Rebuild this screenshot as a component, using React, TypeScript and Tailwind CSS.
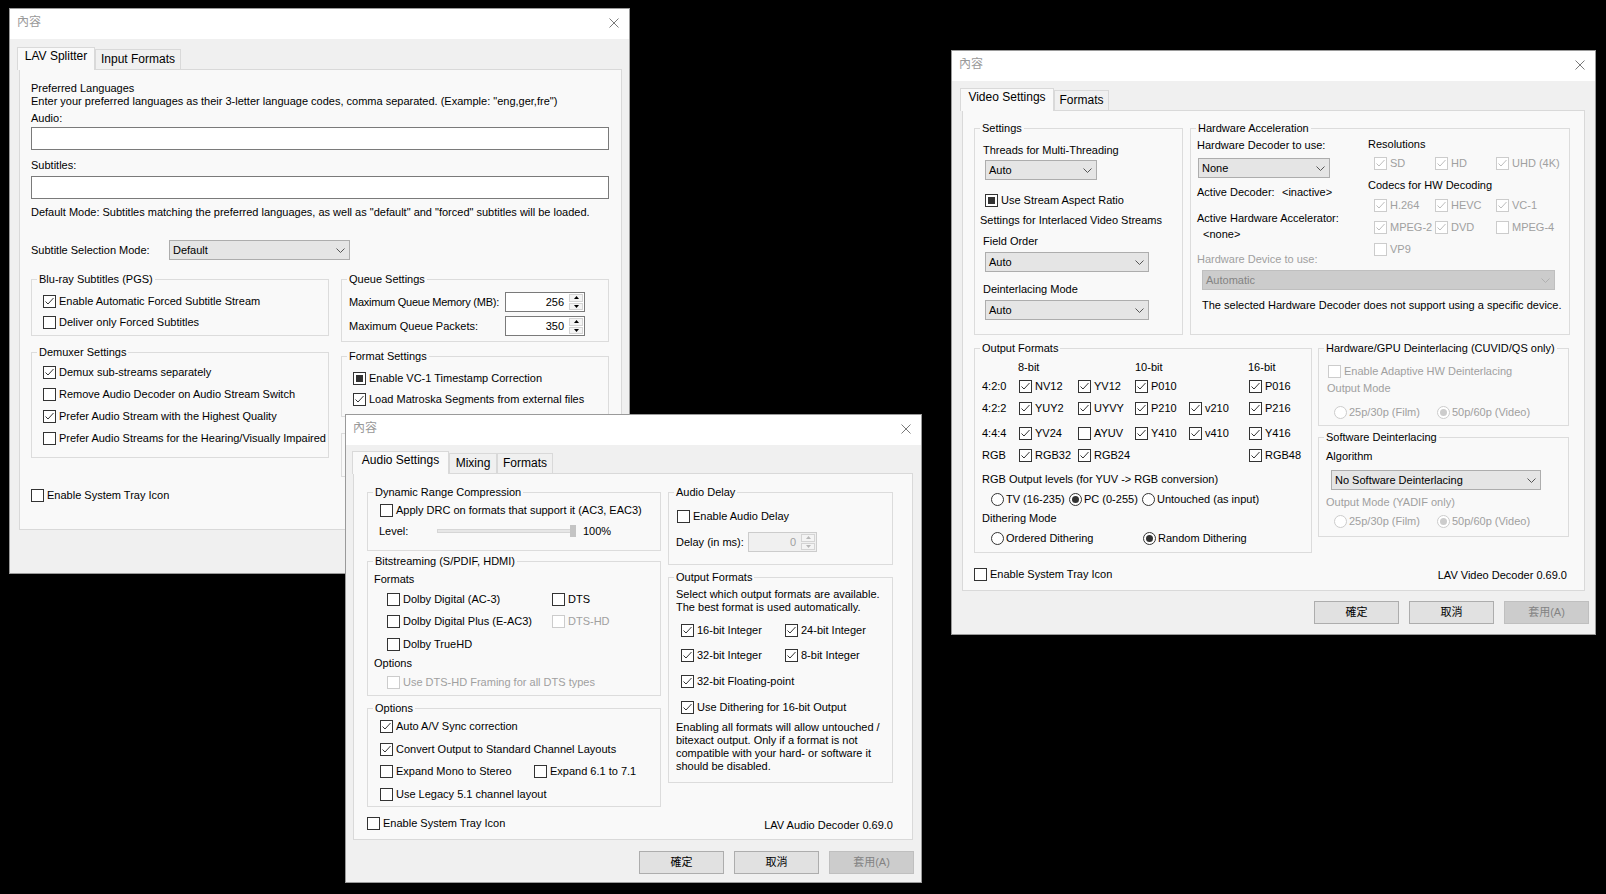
import React from "react";

type Mark = "on" | "off" | "mixed";

/* ---------- small win32-ish controls ---------- */

function Box({ s = "off", dis = false }: { s?: Mark; dis?: boolean }) {
  return (
    <span
      className={
        "flex h-[13px] w-[13px] shrink-0 items-center justify-center border bg-white " +
        (dis ? "border-[#cccccc]" : "border-[#333333]")
      }
    >
      {s === "on" && (
        <svg width="11" height="11" viewBox="0 0 11 11">
          <path d="M1.5 5.5L4 8L9.5 2" fill="none" stroke={dis ? "#bdbdbd" : "#333333"} strokeWidth="1" />
        </svg>
      )}
      {s === "mixed" && <span className="h-[7px] w-[7px] bg-[#333333]" />}
    </span>
  );
}

function Check({ label, s = "off", dis = false, className = "" }: { label: string; s?: Mark; dis?: boolean; className?: string }) {
  return (
    <div className={"flex items-center " + className}>
      <Box s={s} dis={dis} />
      <span className={"ml-[3px] whitespace-nowrap " + (dis ? "text-[#a0a0a0]" : "")}>{label}</span>
    </div>
  );
}

function Radio({ label, on = false, dis = false, className = "" }: { label: string; on?: boolean; dis?: boolean; className?: string }) {
  return (
    <div className={"flex items-center " + className}>
      <span
        className={
          "flex h-[13px] w-[13px] shrink-0 items-center justify-center rounded-full border bg-white " +
          (dis ? "border-[#cccccc]" : "border-[#333333]")
        }
      >
        {on && <span className={"h-[7px] w-[7px] rounded-full " + (dis ? "bg-[#cccccc]" : "bg-[#333333]")} />}
      </span>
      <span className={"ml-[2px] whitespace-nowrap " + (dis ? "text-[#a0a0a0]" : "")}>{label}</span>
    </div>
  );
}

function Combo({ v, dis = false, className = "" }: { v: string; dis?: boolean; className?: string }) {
  return (
    <div
      className={
        "flex h-[20px] items-center justify-between border pl-[3px] pr-[4px] " +
        (dis ? "border-[#bfbfbf] bg-[#cccccc] text-[#838383]" : "border-[#adadad] bg-[#e5e5e5]") +
        " " +
        className
      }
    >
      <span className="whitespace-nowrap">{v}</span>
      <svg width="9" height="5" viewBox="0 0 9 5">
        <path d="M0.5 0.5L4.5 4.5L8.5 0.5" fill="none" stroke={dis ? "#b0b0b0" : "#555555"} strokeWidth="1" />
      </svg>
    </div>
  );
}

function Spin({ v, dis = false, className = "" }: { v: string; dis?: boolean; className?: string }) {
  const arrow = dis ? "#b8b8b8" : "#000000";
  return (
    <div
      className={
        "flex h-[20px] shrink-0 border " +
        (dis ? "border-[#cccccc] bg-[#f0f0f0] text-[#a0a0a0]" : "border-[#7a7a7a] bg-white") +
        " " +
        className
      }
    >
      <span className="flex flex-1 items-center justify-end pr-[4px]">{v}</span>
      <span className="flex w-[16px] flex-col gap-px p-px">
        <span className="flex flex-1 items-center justify-center border border-[#d4d4d4] bg-[#f4f4f4]">
          <svg width="5" height="3" viewBox="0 0 5 3">
            <path d="M0 3L2.5 0L5 3Z" fill={arrow} />
          </svg>
        </span>
        <span className="flex flex-1 items-center justify-center border border-[#d4d4d4] bg-[#f4f4f4]">
          <svg width="5" height="3" viewBox="0 0 5 3">
            <path d="M0 0L2.5 3L5 0Z" fill={arrow} />
          </svg>
        </span>
      </span>
    </div>
  );
}

function Btn({ t, dis = false }: { t: string; dis?: boolean }) {
  return (
    <div
      className={
        "flex h-[23px] w-[85px] items-center justify-center border " +
        (dis ? "border-[#bfbfbf] bg-[#cccccc] text-[#838383]" : "border-[#adadad] bg-[#e1e1e1]")
      }
    >
      {t}
    </div>
  );
}

// group box: outer classes size/offset the frame, inner classes pad the contents
function Group({ title, className = "", inner = "", children }: { title: string; className?: string; inner?: string; children?: React.ReactNode }) {
  return (
    <fieldset className={"min-w-0 border border-[#dcdcdc] " + className}>
      <legend className="ml-[5px] whitespace-nowrap px-[2px] leading-[13px]">{title}</legend>
      <div className={inner}>{children}</div>
    </fieldset>
  );
}

function Tab({ label, sel = false, className = "" }: { label: string; sel?: boolean; className?: string }) {
  if (sel) {
    return (
      <div
        className={
          "relative z-10 -mb-px flex h-[23px] justify-center border border-b-0 border-[#d9d9d9] bg-[#f9f9f9] pt-[1px] text-[12px] leading-[14px] " +
          className
        }
      >
        {label}
      </div>
    );
  }
  return (
    <div className={"flex h-[20px] items-center justify-center border border-b-0 border-[#d9d9d9] bg-[#f0f0f0] text-[12px] " + className}>
      {label}
    </div>
  );
}

function Win({ className, children }: { className: string; children: React.ReactNode }) {
  return (
    <div className={"absolute flex flex-col border border-[#9a9a9a] bg-[#f0f0f0] " + className}>
      <div className="flex h-[30px] shrink-0 items-center justify-between bg-white pb-[3px] pl-[7px] pr-[10px]">
        <span className="text-[12px] text-[#999999]">內容</span>
        <svg width="10" height="10" viewBox="0 0 10 10">
          <path d="M0.5 0.5L9.5 9.5M9.5 0.5L0.5 9.5" stroke="#7a7a7a" strokeWidth="1" />
        </svg>
      </div>
      {children}
    </div>
  );
}

/* ---------- LAV Splitter ---------- */

function SplitterWin() {
  return (
    <Win className="left-[9px] top-[8px] h-[566px] w-[621px]">
      <div className="pl-[7px] pt-[8px]">
        <div className="flex items-end">
          <Tab sel label="LAV Splitter" className="w-[78px]" />
          <Tab label="Input Formats" className="w-[86px]" />
        </div>
        <div className="ml-[2px] h-[461px] w-[603px] border border-[#d9d9d9] bg-[#f9f9f9] pl-[11px]">
          <div className="mt-[12px]">Preferred Languages</div>
          <div>Enter your preferred languages as their 3-letter language codes, comma separated. (Example: "eng,ger,fre")</div>
          <div className="mt-[4px]">Audio:</div>
          <div className="mt-[2px] h-[23px] w-[578px] border border-[#7a7a7a] bg-white" />
          <div className="mt-[9px]">Subtitles:</div>
          <div className="mt-[4px] h-[23px] w-[578px] border border-[#7a7a7a] bg-white" />
          <div className="mt-[7px]">
            Default Mode: Subtitles matching the preferred languages, as well as "default" and "forced" subtitles will be loaded.
          </div>
          <div className="mt-[21px] flex h-[20px] items-center">
            <span className="w-[138px]">Subtitle Selection Mode:</span>
            <Combo v="Default" className="w-[181px]" />
          </div>

          <div className="mt-[13px] flex gap-[12px]">
            <div className="w-[298px]">
              <Group title="Blu-ray Subtitles (PGS)" inner="pb-[2px] pl-[11px] pt-[5px]">
                <Check className="h-[21px]" s="on" label="Enable Automatic Forced Subtitle Stream" />
                <Check className="h-[21px]" label="Deliver only Forced Subtitles" />
              </Group>
              <Group title="Demuxer Settings" className="mt-[10px]" inner="pb-[8px] pl-[11px] pt-[2px]">
                <Check className="h-[22px]" s="on" label="Demux sub-streams separately" />
                <Check className="h-[22px]" label="Remove Audio Decoder on Audio Stream Switch" />
                <Check className="h-[22px]" s="on" label="Prefer Audio Stream with the Highest Quality" />
                <Check className="h-[22px]" label="Prefer Audio Streams for the Hearing/Visually Impaired" />
              </Group>
            </div>
            <div className="w-[268px]">
              <Group title="Queue Settings" inner="pb-[5px] pl-[7px] pr-[23px] pt-[6px]">
                <div className="flex h-[20px] items-center justify-between">
                  <span className="tracking-[-0.25px]">Maximum Queue Memory (MB):</span>
                  <Spin v="256" className="w-[80px]" />
                </div>
                <div className="mt-[4px] flex h-[20px] items-center justify-between">
                  <span>Maximum Queue Packets:</span>
                  <Spin v="350" className="w-[80px]" />
                </div>
              </Group>
              <Group title="Format Settings" className="mt-[8px]" inner="pb-[6px] pl-[11px] pt-[5px]">
                <Check className="h-[21px]" s="mixed" label="Enable VC-1 Timestamp Correction" />
                <Check className="h-[21px]" s="on" label="Load Matroska Segments from external files" />
              </Group>
              {/* next group box, almost fully covered by the audio window */}
              <div className="mt-[16px] h-[44px] border border-[#dcdcdc]" />
            </div>
          </div>

          <Check className="mt-[11px] h-[14px]" label="Enable System Tray Icon" />
        </div>
      </div>
    </Win>
  );
}

/* ---------- LAV Audio ---------- */

function AudioWin() {
  return (
    <Win className="left-[345px] top-[414px] h-[469px] w-[577px]">
      <div className="pl-[6px] pt-[6px]">
        <div className="flex items-end">
          <Tab sel label="Audio Settings" className="w-[97px]" />
          <Tab label="Mixing" className="w-[48px]" />
          <Tab label="Formats" className="w-[56px]" />
        </div>
        <div className="ml-[1px] h-[367px] w-[560px] border border-[#d9d9d9] bg-[#f9f9f9] pl-[13px]">
          <div className="mt-[12px] flex gap-[7px]">
            <div className="w-[294px]">
              <Group title="Dynamic Range Compression" inner="pb-[9px] pl-[12px] pt-[1px]">
                <Check className="h-[21px]" label="Apply DRC on formats that support it (AC3, EAC3)" />
                <div className="flex h-[20px] items-center">
                  <span className="-ml-px w-[58px]">Level:</span>
                  <div className="flex h-[20px] w-[139px] items-center">
                    <div className="h-[4px] flex-1 border border-[#d6d6d6] bg-[#e7e7e7]" />
                    <div className="-ml-[3px] h-[12px] w-[6px] bg-[#c4c4c4]" />
                  </div>
                  <span className="ml-[7px]">100%</span>
                </div>
              </Group>
              <Group title="Bitstreaming (S/PDIF, HDMI)" className="mt-[4px]" inner="pb-[1px] pl-[6px]">
                <div className="mt-[5px]">Formats</div>
                <div className="mt-[2px] pl-[13px]">
                  <div className="flex h-[22.5px] items-center">
                    <Check className="w-[165px]" label="Dolby Digital (AC-3)" />
                    <Check label="DTS" />
                  </div>
                  <div className="flex h-[22.5px] items-center">
                    <Check className="w-[165px]" label="Dolby Digital Plus (E-AC3)" />
                    <Check dis label="DTS-HD" />
                  </div>
                  <Check className="h-[22.5px]" label="Dolby TrueHD" />
                </div>
                <div className="mt-[1px]">Options</div>
                <Check className="mt-[2px] h-[22px] pl-[13px]" dis label="Use DTS-HD Framing for all DTS types" />
              </Group>
              <Group title="Options" className="mt-[6px]" inner="pl-[12px] pt-[1px]">
                <Check className="h-[22.5px]" s="on" label="Auto A/V Sync correction" />
                <Check className="h-[22.5px]" s="on" label="Convert Output to Standard Channel Layouts" />
                <div className="flex h-[22.5px] items-center">
                  <Check className="w-[154px]" label="Expand Mono to Stereo" />
                  <Check label="Expand 6.1 to 7.1" />
                </div>
                <Check className="h-[22.5px]" label="Use Legacy 5.1 channel layout" />
              </Group>
            </div>

            <div className="w-[225px]">
              <Group title="Audio Delay" inner="pb-[12px] pl-[8px] pt-[6px]">
                <Check className="h-[22px]" label="Enable Audio Delay" />
                <div className="mt-[5px] flex h-[20px] items-center">
                  <span className="-ml-px w-[72px]">Delay (in ms):</span>
                  <Spin dis v="0" className="w-[69px]" />
                </div>
              </Group>
              <Group title="Output Formats" className="mt-[6px]" inner="pb-[9px] pl-[7px] pt-[4px]">
                <div>Select which output formats are available.</div>
                <div>The best format is used automatically.</div>
                <div className="mt-[4px] pl-[5px]">
                  <div className="flex h-[25px] items-center">
                    <Check className="w-[104px]" s="on" label="16-bit Integer" />
                    <Check s="on" label="24-bit Integer" />
                  </div>
                  <div className="flex h-[25px] items-center">
                    <Check className="w-[104px]" s="on" label="32-bit Integer" />
                    <Check s="on" label="8-bit Integer" />
                  </div>
                  <Check className="h-[26px]" s="on" label="32-bit Floating-point" />
                  <Check className="h-[26px]" s="on" label="Use Dithering for 16-bit Output" />
                </div>
                <div className="mt-[1px]">
                  Enabling all formats will allow untouched /
                  <br />
                  bitexact output. Only if a format is not
                  <br />
                  compatible with your hard- or software it
                  <br />
                  should be disabled.
                </div>
              </Group>
            </div>
          </div>

          <div className="mt-[10px] flex w-[526px] items-start justify-between">
            <Check className="h-[14px]" label="Enable System Tray Icon" />
            <span className="pt-[2px]">LAV Audio Decoder 0.69.0</span>
          </div>
        </div>

        <div className="mt-[11px] flex justify-end gap-[10px] pr-[7px]">
          <Btn t="確定" />
          <Btn t="取消" />
          <Btn t="套用(A)" dis />
        </div>
      </div>
    </Win>
  );
}

/* ---------- LAV Video ---------- */

const cellW = ["w-[59px]", "w-[57px]", "w-[54px]", "w-[60px]", "w-[50px]"];

const fmtRows: { label: string; cells: ([string, Mark] | null)[]; gap?: boolean }[] = [
  { label: "4:2:0", cells: [["NV12", "on"], ["YV12", "on"], ["P010", "on"], null, ["P016", "on"]] },
  { label: "4:2:2", cells: [["YUY2", "on"], ["UYVY", "on"], ["P210", "on"], ["v210", "on"], ["P216", "on"]] },
  { label: "4:4:4", cells: [["YV24", "on"], ["AYUV", "off"], ["Y410", "on"], ["v410", "on"], ["Y416", "on"]], gap: true },
  { label: "RGB", cells: [["RGB32", "on"], ["RGB24", "on"], null, null, ["RGB48", "on"]] },
];

function VideoWin() {
  return (
    <Win className="left-[951px] top-[50px] h-[585px] w-[645px]">
      <div className="pl-[8px] pt-[7px]">
        <div className="flex items-end">
          <Tab sel label="Video Settings" className="w-[94px]" />
          <Tab label="Formats" className="w-[55px]" />
        </div>
        <div className="ml-[2px] h-[481px] w-[623px] border border-[#d9d9d9] bg-[#f9f9f9] pl-[11px]">
          <div className="mt-[11px] flex gap-[7px]">
            <Group title="Settings" className="w-[209px]" inner="pb-[14px] pl-[8px]">
              <div className="mt-[9px]">Threads for Multi-Threading</div>
              <Combo v="Auto" className="ml-[2px] mt-[3px] w-[112px]" />
              <Check className="ml-[2px] mt-[10px] h-[20px]" s="mixed" label="Use Stream Aspect Ratio" />
              <div className="-ml-[3px] mt-[4px]">Settings for Interlaced Video Streams</div>
              <div className="mt-[8px]">Field Order</div>
              <Combo v="Auto" className="ml-[2px] mt-[4px] w-[164px]" />
              <div className="mt-[11px]">Deinterlacing Mode</div>
              <Combo v="Auto" className="ml-[2px] mt-[4px] w-[164px]" />
            </Group>

            <Group title="Hardware Acceleration" className="w-[380px]" inner="pb-[22px] pl-[6px]">
              <div className="flex">
                <div className="w-[171px]">
                  <div className="mt-[4px]">Hardware Decoder to use:</div>
                  <Combo v="None" className="ml-[1px] mt-[6px] w-[132px]" />
                  <div className="mt-[8px] flex">
                    <span className="w-[85px]">Active Decoder:</span>
                    <span>{"<inactive>"}</span>
                  </div>
                  <div className="mt-[13px]">Active Hardware Accelerator:</div>
                  <div className="ml-[6px] mt-[3px]">{"<none>"}</div>
                  <div className="mt-[12px] text-[#a0a0a0]">Hardware Device to use:</div>
                </div>
                <div>
                  <div className="mt-[3px]">Resolutions</div>
                  <div className="ml-[6px] mt-[3px] flex h-[18px] items-center">
                    <Check className="w-[61px]" s="on" dis label="SD" />
                    <Check className="w-[61px]" s="on" dis label="HD" />
                    <Check s="on" dis label="UHD (4K)" />
                  </div>
                  <div className="mt-[7px]">Codecs for HW Decoding</div>
                  <div className="ml-[6px] mt-[2px]">
                    <div className="flex h-[22px] items-center">
                      <Check className="w-[61px]" s="on" dis label="H.264" />
                      <Check className="w-[61px]" s="on" dis label="HEVC" />
                      <Check s="on" dis label="VC-1" />
                    </div>
                    <div className="flex h-[22px] items-center">
                      <Check className="w-[61px]" s="on" dis label="MPEG-2" />
                      <Check className="w-[61px]" s="on" dis label="DVD" />
                      <Check dis label="MPEG-4" />
                    </div>
                    <Check className="h-[22px]" dis label="VP9" />
                  </div>
                </div>
              </div>
              <Combo dis v="Automatic" className="ml-[5px] mt-[4px] w-[353px]" />
              <div className="ml-[5px] mt-[9px]">The selected Hardware Decoder does not support using a specific device.</div>
            </Group>
          </div>

          <div className="mt-[7px] flex gap-[6px]">
            <Group title="Output Formats" className="w-[338px]" inner="pb-[4px] pl-[7px]">
              <div className="mt-[6px] flex h-[13px]">
                <span className="w-[36px]" />
                <span className="w-[117px]">8-bit</span>
                <span className="w-[113px]">10-bit</span>
                <span>16-bit</span>
              </div>
              <div className="mt-[1px]">
                {fmtRows.map((r) => (
                  <div key={r.label} className={"flex h-[22px] items-center " + (r.gap ? "mt-[3px]" : "")}>
                    <span className="w-[37px]">{r.label}</span>
                    {r.cells.map((c, i) => (
                      <div key={i} className={cellW[i]}>
                        {c && <Check s={c[1]} label={c[0]} />}
                      </div>
                    ))}
                  </div>
                ))}
              </div>
              <div className="mt-[7px]">RGB Output levels (for YUV {"->"} RGB conversion)</div>
              <div className="ml-[9px] mt-[3px] flex h-[20px] items-center">
                <Radio className="w-[78px]" label="TV (16-235)" />
                <Radio className="w-[73px]" on label="PC (0-255)" />
                <Radio label="Untouched (as input)" />
              </div>
              <div className="mt-[3px]">Dithering Mode</div>
              <div className="ml-[9px] mt-[3px] flex h-[20px] items-center">
                <Radio className="w-[152px]" label="Ordered Dithering" />
                <Radio on label="Random Dithering" />
              </div>
            </Group>

            <div className="w-[251px]">
              <Group title="Hardware/GPU Deinterlacing (CUVID/QS only)" inner="pb-[3px] pl-[9px] pt-[6px]">
                <Check className="h-[20px]" dis label="Enable Adaptive HW Deinterlacing" />
                <div className="-ml-px mt-[1px] text-[#a0a0a0]">Output Mode</div>
                <div className="ml-[6px] mt-[7px] flex h-[20px] items-center">
                  <Radio dis className="w-[103px]" label="25p/30p (Film)" />
                  <Radio dis on label="50p/60p (Video)" />
                </div>
              </Group>
              <Group title="Software Deinterlacing" className="mt-[5px]" inner="pb-[5px] pl-[7px]">
                <div className="mt-[6px]">Algorithm</div>
                <Combo v="No Software Deinterlacing" className="ml-[5px] mt-[7px] w-[210px]" />
                <div className="mt-[6px] text-[#a0a0a0]">Output Mode (YADIF only)</div>
                <div className="ml-[8px] mt-[2px] flex h-[20px] items-center">
                  <Radio dis className="w-[103px]" label="25p/30p (Film)" />
                  <Radio dis on label="50p/60p (Video)" />
                </div>
              </Group>
            </div>
          </div>

          <div className="mt-[14px] flex w-[593px] items-start justify-between">
            <Check className="h-[14px]" label="Enable System Tray Icon" />
            <span className="pt-[2px]">LAV Video Decoder 0.69.0</span>
          </div>
        </div>

        <div className="mt-[10px] flex justify-end gap-[10px] pr-[6px]">
          <Btn t="確定" />
          <Btn t="取消" />
          <Btn t="套用(A)" dis />
        </div>
      </div>
    </Win>
  );
}

export default function App() {
  return (
    <div className="relative h-[894px] w-[1606px] overflow-hidden whitespace-nowrap bg-black font-['Liberation_Sans','Noto_Sans_CJK_TC',sans-serif] text-[11px] leading-[13px] text-black">
      <SplitterWin />
      <AudioWin />
      <VideoWin />
    </div>
  );
}
